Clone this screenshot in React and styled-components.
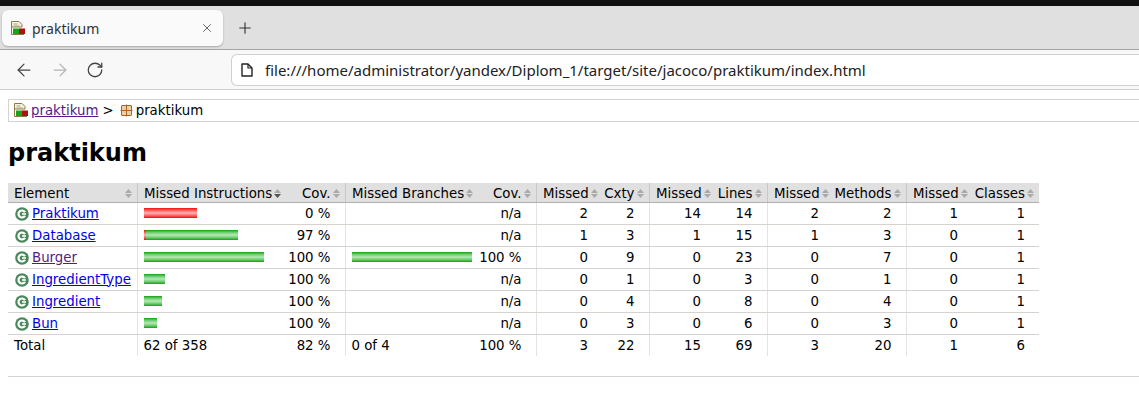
import React from "react";
import styled, { createGlobalStyle } from "styled-components";
import { ArrowLeft, ArrowRight, RotateCw, Plus, X } from "lucide-react";

const rows = [
    { name: "Praktikum", missedBar: 53, coveredBar: 0, cov: "0 %", branchBar: 0, branchCov: "n/a", values: [2, 2, 14, 14, 2, 2, 1, 1] },
    { name: "Database", missedBar: 2, coveredBar: 92, cov: "97 %", branchBar: 0, branchCov: "n/a", values: [1, 3, 1, 15, 1, 3, 0, 1] },
    { name: "Burger", visited: true, missedBar: 0, coveredBar: 120, cov: "100 %", branchBar: 120, branchCov: "100 %", values: [0, 9, 0, 23, 0, 7, 0, 1] },
    { name: "IngredientType", missedBar: 0, coveredBar: 21, cov: "100 %", branchBar: 0, branchCov: "n/a", values: [0, 1, 0, 3, 0, 1, 0, 1] },
    { name: "Ingredient", missedBar: 0, coveredBar: 18, cov: "100 %", branchBar: 0, branchCov: "n/a", values: [0, 4, 0, 8, 0, 4, 0, 1] },
    { name: "Bun", missedBar: 0, coveredBar: 13, cov: "100 %", branchBar: 0, branchCov: "n/a", values: [0, 3, 0, 6, 0, 3, 0, 1] },
];

const totals = [3, 22, 15, 69, 3, 20, 1, 6];

const counterHeaders = [
    ["Missed", "Cxty"],
    ["Missed", "Lines"],
    ["Missed", "Methods"],
    ["Missed", "Classes"],
];

function ReportIcon() {
    return (
        <svg width="14" height="16" viewBox="0 0 14 16">
            <path d="M0.500 1.500h7.500l3 3v2.500h-10.500z" fill="#f6f2de" stroke="#8a7a4a" />
            <path d="M0.500 7v7.500h12.500" fill="none" stroke="#8a7a4a" />
            <path d="M2.500 4h4M2.500 6h6" stroke="#a8a488" />
            <rect x="2" y="8.500" width="6" height="5.500" fill="#14a814" />
            <rect x="8" y="8.500" width="6" height="5.500" fill="#b01010" />
        </svg>
    );
}

function PackageIcon() {
    return (
        <svg width="13" height="14" viewBox="0 0 13 14">
            <rect x="1.500" y="2.500" width="10" height="10" rx="0.500" fill="#f0cfa4" stroke="#a8652a" />
            <path d="M6.500 1.500v12M0.500 7.500h12" stroke="#a8652a" />
        </svg>
    );
}

function ClassIcon() {
    return (
        <svg width="14" height="14" viewBox="0 0 14 14">
            <circle cx="7" cy="7" r="6.800" fill="#47875a" />
            <path d="M10 5.200A3.500 3.500 0 1 0 10 8.800" fill="none" stroke="#fff" strokeWidth="2.200" />
            <path d="M7 7h4" stroke="#fff" strokeWidth="1.600" />
        </svg>
    );
}

function PageIcon() {
    return (
        <svg width="12" height="14" viewBox="0 0 12 14">
            <path d="M1 1h6L11 5v8H1z" fill="#fff" stroke="#222" strokeWidth="1.400" strokeLinejoin="round" />
            <path d="M7 1v4h4" fill="none" stroke="#222" strokeWidth="1.200" />
        </svg>
    );
}

function SortArrows({ active }) {
    return (
        <SortSvg width="7" height="9" viewBox="0 0 7 9">
            <path d="M3.500 0L7 4H0z" fill="#aaa" />
            <path d="M3.500 9L0 5h7z" fill={active ? "#555" : "#aaa"} />
        </SortSvg>
    );
}

function HeaderCell({ label, divider, tight, spread, active }) {
    return (
        <HeadCell $divider={divider} $tight={tight}>
            <HeadInner $spread={spread}>
                <span>{label}</span>
                <SortArrows active={active} />
            </HeadInner>
        </HeadCell>
    );
}

function App() {
    return (
        <Window>
            <GlobalStyle />
            <TopStrip />
            <TabStrip>
                <Tab>
                    <ReportIcon />
                    <TabTitle>praktikum</TabTitle>
                    <X size={14} strokeWidth={1.500} color="#555" />
                </Tab>
                <Plus size={18} strokeWidth={1.500} color="#333" />
            </TabStrip>
            <Toolbar>
                <ArrowLeft size={20} strokeWidth={1.500} color="#444" />
                <ArrowRight size={20} strokeWidth={1.500} color="#b4b4b4" />
                <RotateCw size={18} strokeWidth={1.700} color="#444" />
                <AddressBar>
                    <PageIcon />
                    <AddressText>file:///home/administrator/yandex/Diplom_1/target/site/jacoco/praktikum/index.html</AddressText>
                </AddressBar>
            </Toolbar>
            <Page>
                <Breadcrumb>
                    <ReportIcon />
                    <CrumbLink href="#">praktikum</CrumbLink>
                    <CrumbArrow>&gt;</CrumbArrow>
                    <PackageIcon />
                    <span>praktikum</span>
                </Breadcrumb>
                <Heading>praktikum</Heading>
                <CoverageTable>
                    <colgroup>
                        <col width="129" />
                        <col width="145" />
                        <col width="63" />
                        <col width="128" />
                        <col width="63" />
                        <col width="63" />
                        <col width="50" />
                        <col width="63" />
                        <col width="55" />
                        <col width="63" />
                        <col width="76" />
                        <col width="63" />
                        <col width="70" />
                    </colgroup>
                    <thead>
                        <tr>
                            <HeaderCell label="Element" spread />
                            <HeaderCell label="Missed Instructions" divider tight spread active />
                            <HeaderCell label="Cov." />
                            <HeaderCell label="Missed Branches" divider tight spread />
                            <HeaderCell label="Cov." />
                            {counterHeaders.map(([missed, total]) => (
                                <React.Fragment key={total}>
                                    <HeaderCell label={missed} divider tight spread />
                                    <HeaderCell label={total} />
                                </React.Fragment>
                            ))}
                        </tr>
                    </thead>
                    <tbody>
                        {rows.map((row) => (
                            <tr key={row.name}>
                                <Cell>
                                    <ElementName>
                                        <ClassIcon />
                                        <ClassLink href="#" $visited={row.visited}>{row.name}</ClassLink>
                                    </ElementName>
                                </Cell>
                                <Cell $divider>
                                    <Bar>
                                        {row.missedBar > 0 && <BarPart $color="red" style={{ width: row.missedBar }} />}
                                        {row.coveredBar > 0 && <BarPart $color="green" style={{ width: row.coveredBar }} />}
                                    </Bar>
                                </Cell>
                                <NumberCell>{row.cov}</NumberCell>
                                <Cell $divider>
                                    <Bar>
                                        {row.branchBar > 0 && <BarPart $color="green" style={{ width: row.branchBar }} />}
                                    </Bar>
                                </Cell>
                                <NumberCell>{row.branchCov}</NumberCell>
                                {row.values.map((value, index) => (
                                    <NumberCell key={index} $divider={index % 2 === 0} $missed={index % 2 === 0}>{value}</NumberCell>
                                ))}
                            </tr>
                        ))}
                    </tbody>
                    <tfoot>
                        <tr>
                            <FootCell>Total</FootCell>
                            <FootCell $divider>62 of 358</FootCell>
                            <FootNumber>82 %</FootNumber>
                            <FootCell $divider>0 of 4</FootCell>
                            <FootNumber>100 %</FootNumber>
                            {totals.map((value, index) => (
                                <FootNumber key={index} $divider={index % 2 === 0} $missed={index % 2 === 0}>{value}</FootNumber>
                            ))}
                        </tr>
                    </tfoot>
                </CoverageTable>
                <Rule />
            </Page>
        </Window>
    );
}

const GlobalStyle = createGlobalStyle`
    html, body{
        margin: 0;
        padding: 0;
        background: #fff;
    }
`

const Window = styled.div`
    width: 1139px;
    height: 400px;
    overflow: hidden;
    background: #fff;
`

const TopStrip = styled.div`
    height: 6px;
    background: #111;
`

const TabStrip = styled.div`
    height: 36px;
    padding: 4px 0 3px 2px;
    display: flex;
    align-items: center;
    gap: 13px;
    background: #e0e0e0;
    border-bottom: 1px solid #a4a4a4;
`

const Tab = styled.div`
    width: 221px;
    height: 36px;
    box-sizing: border-box;
    padding: 0 9px;
    display: flex;
    align-items: center;
    background: #fafafa;
    border-radius: 6px;
    box-shadow: 0 1px 2px rgba(0, 0, 0, 0.25);
`

const TabTitle = styled.span`
    flex: 1;
    margin-left: 7px;
    font-family: "Noto Sans", sans-serif;
    font-size: 14px;
    color: #333;
`

const Toolbar = styled.div`
    height: 40px;
    box-sizing: border-box;
    padding: 4px 0 3px 14px;
    display: flex;
    align-items: center;
    gap: 16px;
    background: #f8f8f8;
    border-bottom: 1px solid #cfcfcf;
`

const AddressBar = styled.div`
    flex: 1;
    height: 32px;
    margin-left: 111px;
    box-sizing: border-box;
    padding-left: 9px;
    display: flex;
    align-items: center;
    gap: 12px;
    background: #fff;
    border: 1px solid #d0d0d0;
    border-right: none;
    border-radius: 6px 0 0 6px;
`

const AddressText = styled.span`
    font-family: "Noto Sans", sans-serif;
    font-size: 15px;
    color: #222;
    white-space: nowrap;
`

const Page = styled.div`
    padding: 9px 0 0 8px;
    font-family: "DejaVu Sans", sans-serif;
    font-size: 13.33px;
    color: #000;
`

const Breadcrumb = styled.div`
    height: 23px;
    box-sizing: border-box;
    padding-left: 5px;
    padding-bottom: 1px;
    display: flex;
    align-items: center;
    gap: 3px;
    border: 1px solid #d6d3ce;
    border-right: none;
`

const CrumbLink = styled.a`
    color: #551a8b;
    text-decoration: underline;
`

const CrumbArrow = styled.span`
    margin: 0 3px 0 1px;
`

const Heading = styled.h1`
    margin: 17px 0 16px;
    font-size: 24px;
    line-height: 28px;
    font-weight: bold;
`

const CoverageTable = styled.table`
    width: 1031px;
    table-layout: fixed;
    border-collapse: collapse;
    border-spacing: 0;
`

const SortSvg = styled.svg`
    flex-shrink: 0;
`

const HeadCell = styled.td`
    height: 19px;
    box-sizing: border-box;
    padding: 2px ${({ $tight }) => ($tight ? "1px" : "5px")} 0 ${({ $tight }) => ($tight ? "6.500px" : "6px")};
    background: #e0e0e0;
    border-bottom: 1px solid #b0b0b0;
    border-left: ${({ $divider }) => ($divider ? "1px solid #c8c8c8" : "none")};
    white-space: nowrap;
`

const HeadInner = styled.div`
    display: flex;
    align-items: center;
    justify-content: ${({ $spread }) => ($spread ? "space-between" : "flex-end")};
    gap: 2px;
`

const Cell = styled.td`
    height: 22px;
    box-sizing: border-box;
    padding: 0 0 0 6px;
    border-bottom: 1px solid #d6d3ce;
    border-left: ${({ $divider }) => ($divider ? "1px solid #e4e4e4" : "none")};
    white-space: nowrap;
`

const NumberCell = styled(Cell)`
    padding: 0 ${({ $missed }) => ($missed ? "11px" : "14px")} 0 0;
    text-align: right;
`

const FootCell = styled(Cell)`
    border-bottom: none;
`

const FootNumber = styled(NumberCell)`
    border-bottom: none;
`

const ElementName = styled.div`
    display: flex;
    align-items: center;
    gap: 3px;
    padding-left: 1px;
    svg{
        flex-shrink: 0;
        margin-top: 2px;
    }
`

const ClassLink = styled.a`
    color: ${({ $visited }) => ($visited ? "#551a8b" : "#0000ee")};
    text-decoration: underline;
`

const Bar = styled.div`
    display: flex;
    height: 10px;
`

const BarPart = styled.div`
    height: 10px;
    background: ${({ $color }) =>
        $color === "red"
            ? "linear-gradient(#f40c0c, #ff5050 20%, #ffb4b4 50%, #ff5050 80%, #f40c0c)"
            : "linear-gradient(#0f9f0f, #60c860 20%, #b8e8b8 50%, #60c860 80%, #0f9f0f)"};
`

const Rule = styled.hr`
    margin: 20px 0 0;
    border: none;
    border-top: 1px solid #d6d3ce;
`

export default App;
